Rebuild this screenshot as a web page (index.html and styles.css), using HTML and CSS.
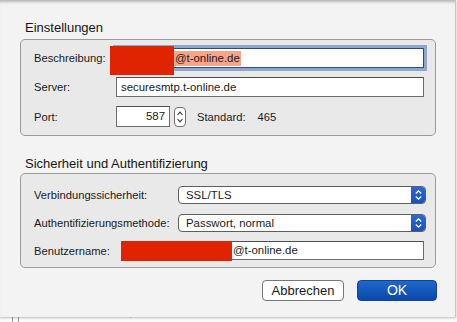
FILE: index.html
```html
<!DOCTYPE html>
<html lang="de">
<head>
    <meta charset="UTF-8">
    <title>Einstellungen</title>
    <link rel="stylesheet" href="styles.css">
</head>
<body>
    <div class="behind">
        <span class="mark m1"></span>
        <span class="mark m2"></span>
        <span class="mark m3"></span>
    </div>

    <div class="sheet">
        <h2 class="group_title">Einstellungen</h2>
        <div class="group group_one">
            <div class="row row_desc">
                <div class="label">Beschreibung:</div>
                <div class="field field_focus"><span class="selected">@t-online.de</span></div>
            </div>
            <div class="row row_server">
                <div class="label">Server:</div>
                <div class="field">securesmtp.t-online.de</div>
            </div>
            <div class="row row_port">
                <div class="label">Port:</div>
                <div class="field field_port">587</div>
                <div class="stepper">
                    <svg width="12" height="20" viewBox="0 0 12 20">
                        <path d="M3.5 8 L6 5.2 L8.5 8" fill="none" stroke="#333" stroke-width="1.1"/>
                        <path d="M3.5 12 L6 14.8 L8.5 12" fill="none" stroke="#333" stroke-width="1.1"/>
                    </svg>
                </div>
                <div class="standard">Standard:</div>
                <div class="standard_value">465</div>
            </div>
        </div>

        <h2 class="group_title title_two">Sicherheit und Authentifizierung</h2>
        <div class="group group_two">
            <div class="row row_sec">
                <div class="label label_wide">Verbindungssicherheit:</div>
                <div class="select">
                    <span class="select_text">SSL/TLS</span>
                    <span class="select_arrow">
                        <svg width="15" height="18" viewBox="0 0 15 18">
                            <path d="M4.8 7.5 L7.5 4.8 L10.2 7.5" fill="none" stroke="#fff" stroke-width="1.3"/>
                            <path d="M4.8 10.5 L7.5 13.2 L10.2 10.5" fill="none" stroke="#fff" stroke-width="1.3"/>
                        </svg>
                    </span>
                </div>
            </div>
            <div class="row row_auth">
                <div class="label label_wide">Authentifizierungsmethode:</div>
                <div class="select">
                    <span class="select_text">Passwort, normal</span>
                    <span class="select_arrow">
                        <svg width="15" height="18" viewBox="0 0 15 18">
                            <path d="M4.8 7.5 L7.5 4.8 L10.2 7.5" fill="none" stroke="#fff" stroke-width="1.3"/>
                            <path d="M4.8 10.5 L7.5 13.2 L10.2 10.5" fill="none" stroke="#fff" stroke-width="1.3"/>
                        </svg>
                    </span>
                </div>
            </div>
            <div class="row row_user">
                <div class="label label_wide">Benutzername:</div>
                <div class="field field_user">@t-online.de</div>
            </div>
        </div>

        <div class="buttons">
            <div class="btn btn_cancel">Abbrechen</div>
            <div class="btn btn_ok">OK</div>
        </div>

        <!-- geschwärzte Stellen -->
        <div class="redact redact_desc"></div>
        <div class="redact redact_user"></div>
    </div>
</body>
</html>
```

FILE: styles.css
```css
body {
    margin: 0;
    background: #fafafa;
    font-family: "Liberation Sans", Arial, sans-serif;
    color: #1a1a1a;
    width: 457px;
    height: 322px;
    overflow: hidden;
    position: relative;
}

/* fenster dahinter */
.behind {
    position: absolute;
    left: 0;
    top: 317px;
    width: 457px;
    height: 5px;
}

.mark {
    position: absolute;
    top: 0;
    width: 1px;
    height: 5px;
    background: #9a9a9a;
}

.m1 { left: 12px; }
.m2 { left: 18px; }
.m3 { left: 130px; height: 1px; background: #c8c8c8; }

.sheet {
    position: relative;
    width: 456px;
    height: 317px;
    box-sizing: border-box;
    padding: 20px 0 0 20px;
    background: #f3f3f3;
    border-right: 1px solid #c6c6c6;
    box-shadow: 0 1px 2px rgba(0, 0, 0, 0.25), inset 0 4px 3px -2px rgba(0, 0, 0, 0.25);
}

.group_title {
    margin: 0 0 3px 5px;
    font-size: 13px;
    font-weight: normal;
    line-height: 16px;
    color: #151515;
}

.title_two {
    margin-top: 20px;
    margin-bottom: 1px;
}

.group {
    width: 416px;
    box-sizing: border-box;
    border: 1px solid #9b9b9b;
    border-radius: 5px;
    background: #e9e9e9;
    display: flex;
    flex-direction: column;
    padding-left: 13px;
}

.group_one {
    height: 97px;
    padding-top: 8px;
}

.group_two {
    height: 95px;
    padding-top: 12px;
}

.row {
    display: flex;
    align-items: center;
}

.label {
    width: 82px;
    flex: none;
    font-size: 11.2px;
}

.label_wide {
    width: 144px;
}

.field {
    box-sizing: border-box;
    width: 308px;
    height: 20px;
    background: #fff;
    border: 1px solid #6c6c6c;
    border-top-color: #4e4e4e;
    font-size: 11.4px;
    line-height: 18px;
    padding-left: 4px;
    white-space: nowrap;
}

.row_desc .field { height: 20px; }
.row_server { margin-top: 9px; }
.row_port { margin-top: 9px; height: 21px; }

.field_focus {
    border: 1px solid #2d4c78;
    box-shadow: 0 0 0 3px #8ea8cc;
    padding-left: 56px;
}

.selected {
    background: #f7a489;
    padding: 1px 1px 2px 2px;
}

.field_port {
    width: 54px;
    height: 21px;
    text-align: right;
    padding-right: 4px;
    line-height: 19px;
}

.stepper {
    margin-left: 4px;
    width: 12px;
    height: 20px;
    box-sizing: border-box;
    border: 1px solid #6e6e6e;
    border-radius: 4px;
    background: #fff;
    display: flex;
    align-items: center;
    justify-content: center;
}

.stepper svg {
    display: block;
    margin: -1px;
}

.standard {
    margin-left: 11px;
    font-size: 11.2px;
}

.standard_value {
    margin-left: 12px;
    font-size: 11.2px;
}

.select {
    box-sizing: border-box;
    width: 248px;
    height: 18px;
    display: flex;
    justify-content: space-between;
    background: #fff;
    border: 1px solid #5e5e5e;
    border-radius: 4px;
    overflow: hidden;
    font-size: 11.4px;
    line-height: 16px;
}

.select_text {
    padding-left: 7px;
}

.select_arrow {
    width: 15px;
    height: 18px;
    margin: -1px -1px -1px 0;
    background: linear-gradient(#2c6ad6, #1a50b6);
    flex: none;
}

.select_arrow svg {
    display: block;
}

.row_auth { margin-top: 10px; }

.row_user { margin-top: 9px; }

.field_user {
    margin-left: 2px;
    width: 244px;
    height: 19px;
    line-height: 17px;
    padding-left: 52px;
}

.buttons {
    width: 417px;
    display: flex;
    justify-content: flex-end;
    gap: 13px;
    margin-top: 12px;
}

.btn {
    box-sizing: border-box;
    height: 21px;
    border-radius: 4px;
    text-align: center;
    font-size: 13px;
    line-height: 19px;
}

.btn_cancel {
    width: 82px;
    background: #fff;
    border: 1px solid #777;
}

.btn_ok {
    width: 80px;
    background: linear-gradient(#2167cf, #0a49a9);
    border: 1px solid #0a45a0;
    color: #fff;
    font-size: 14px;
}

.redact {
    position: absolute;
    background: #e02300;
}

.redact_desc {
    left: 110px;
    top: 46px;
    width: 64px;
    height: 29px;
}

.redact_user {
    left: 121px;
    top: 241px;
    width: 111px;
    height: 20px;
}
```
